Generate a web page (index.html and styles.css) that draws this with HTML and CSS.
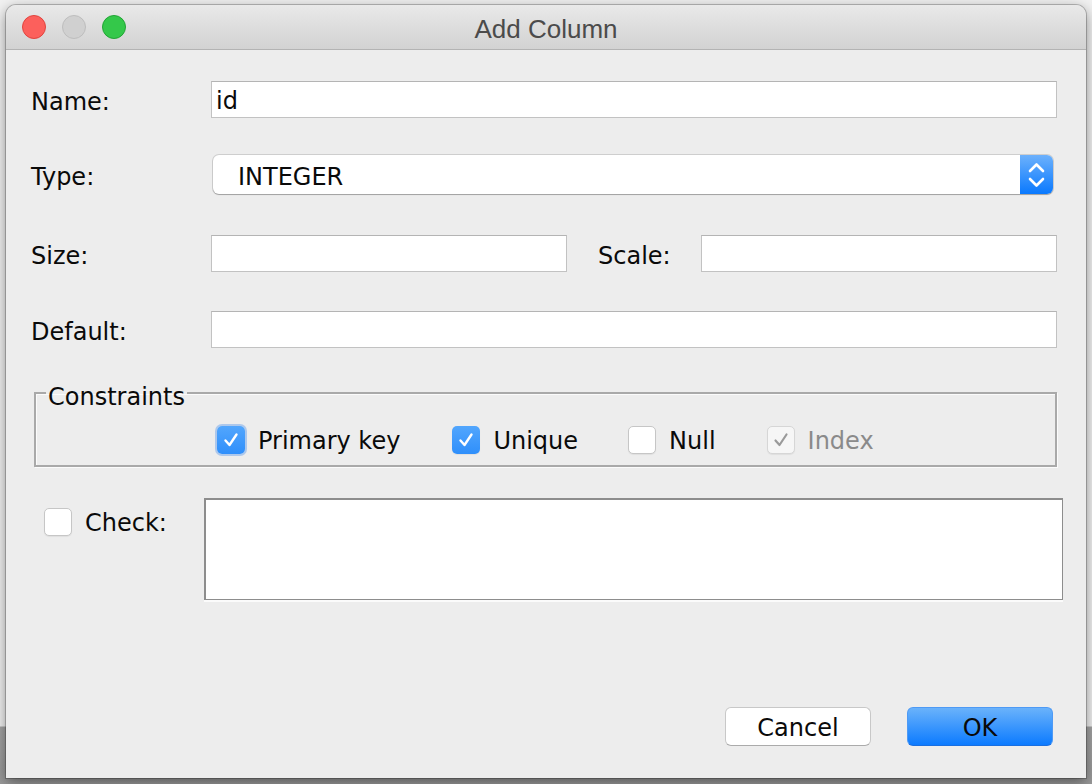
FILE: index.html
```html
<!DOCTYPE html>
<html>
<head>
<meta charset="utf-8">
<title>Add Column</title>
<link rel="stylesheet" href="styles.css">
</head>
<body>
<div class="window">
  <div class="titlebar">
    <div class="lights">
      <span class="light red"></span>
      <span class="light grey"></span>
      <span class="light green"></span>
    </div>
    <div class="title">Add Column</div>
    <div></div>
  </div>
  <div class="content">
    <div class="row row-name">
      <label class="label">Name:</label>
      <div class="input">id</div>
    </div>
    <div class="row row-type">
      <label class="label">Type:</label>
      <div class="select">
        <span class="select-text">INTEGER</span>
        <span class="stepper">
          <svg width="33" height="39" viewBox="0 0 33 39"><polyline points="10,16 16.5,9.5 23,16" fill="none" stroke="#fff" stroke-width="2.6" stroke-linecap="round" stroke-linejoin="round"/><polyline points="10,24 16.5,30.5 23,24" fill="none" stroke="#fff" stroke-width="2.6" stroke-linecap="round" stroke-linejoin="round"/></svg>
        </span>
      </div>
    </div>
    <div class="row row-size">
      <label class="label">Size:</label>
      <div class="input"></div>
      <label class="label label-scale">Scale:</label>
      <div class="input"></div>
    </div>
    <div class="row row-default">
      <label class="label">Default:</label>
      <div class="input"></div>
    </div>
    <fieldset class="group">
      <legend class="legend">Constraints</legend>
      <div class="checks">
        <div class="check-item">
          <span class="cb checked focus"><svg width="28" height="28" viewBox="0 0 28 28"><polyline points="8.5,14.5 12.5,19 19.5,8.5" fill="none" stroke="#fff" stroke-width="2.4" stroke-linecap="round" stroke-linejoin="round"/></svg></span>
          <span class="cb-text">Primary key</span>
        </div>
        <div class="check-item">
          <span class="cb checked"><svg width="28" height="28" viewBox="0 0 28 28"><polyline points="8.5,14.5 12.5,19 19.5,8.5" fill="none" stroke="#fff" stroke-width="2.4" stroke-linecap="round" stroke-linejoin="round"/></svg></span>
          <span class="cb-text">Unique</span>
        </div>
        <div class="check-item">
          <span class="cb"></span>
          <span class="cb-text">Null</span>
        </div>
        <div class="check-item">
          <span class="cb disabled"><svg width="28" height="28" viewBox="0 0 28 28"><polyline points="8.5,14.5 12.5,19 19.5,8.5" fill="none" stroke="#9a9a9a" stroke-width="2.2" stroke-linecap="round" stroke-linejoin="round"/></svg></span>
          <span class="cb-text disabled-text">Index</span>
        </div>
      </div>
    </fieldset>
    <div class="row-check">
      <div class="check-left">
        <span class="cb"></span>
        <span class="cb-text">Check:</span>
      </div>
      <div class="textarea"></div>
    </div>
    <div class="buttons">
      <button class="btn">Cancel</button>
      <button class="btn primary">OK</button>
    </div>
  </div>
</div>
</body>
</html>
```

FILE: styles.css
```css
* { box-sizing: border-box; }
html, body { margin: 0; padding: 0; }
body {
  width: 1092px;
  height: 784px;
  overflow: hidden;
  background: linear-gradient(#f1f1f1 0, #f1f1f1 726px, #a4a4a4 727px, #9a9a9a 784px);
  font-family: "DejaVu Sans", "Liberation Sans", sans-serif;
  font-size: 24px;
  color: #0a0a0a;
}
.window {
  margin: 5px 0 0 6px;
  width: 1080px;
  height: 773px;
  background: #ededed;
  border-radius: 10px 10px 0 0;
  box-shadow: 0 0 0 1px rgba(0,0,0,0.22), 0 4px 14px rgba(0,0,0,0.45);
  display: flex;
  flex-direction: column;
  overflow: hidden;
}
.titlebar {
  height: 45px;
  flex: none;
  background: linear-gradient(#e9e9e9, #d2d2d2);
  border-bottom: 1px solid #b3b3b3;
  display: grid;
  grid-template-columns: 1fr auto 1fr;
  align-items: center;
}
.lights {
  display: flex;
  gap: 16px;
  padding-left: 16px;
  margin-top: -1px;
}
.light {
  width: 24px;
  height: 24px;
  border-radius: 50%;
  display: block;
}
.red { background: #fc605c; border: 1px solid #e0443e; }
.grey { background: #d0d0d0; border: 1px solid #bdbdbd; }
.green { background: #34c84a; border: 1px solid #22a435; }
.title {
  font-family: "Liberation Sans", Arial, sans-serif;
  font-size: 26px;
  color: #4b4b4b;
  margin-top: 5px;
}
.content {
  padding: 31px 29px 0 25px;
  display: flex;
  flex-direction: column;
}
.row {
  display: grid;
  grid-template-columns: 180px 1fr;
  align-items: center;
}
.label { line-height: 30px; margin-top: 4px; }
.input {
  height: 37px;
  background: #fff;
  border: 1px solid #c2c2c2;
  border-top-color: #b4b4b4;
  padding: 2px 4px 0 4px;
  line-height: 35px;
}
.row-name { height: 37px; }
.row-type { height: 39px; margin-top: 37px; }
.row-size {
  height: 37px;
  margin-top: 41px;
  grid-template-columns: 180px 356px 134px 1fr;
}
.label-scale { margin-left: 31px; }
.row-default { height: 37px; margin-top: 39px; }
.select {
  height: 39px;
  margin: 0 4px 0 2px;
  background: #fff;
  border-radius: 6px;
  box-shadow: 0 0 0 1px rgba(0,0,0,0.13), 0 1px 1px rgba(0,0,0,0.22);
  display: flex;
  align-items: center;
  justify-content: space-between;
}
.select-text { padding-left: 25px; line-height: 30px; margin-top: 4px; }
.stepper {
  width: 33px;
  height: 39px;
  border-radius: 0 6px 6px 0;
  background: linear-gradient(#6cb1fc, #0a79fe);
  display: block;
}
.stepper svg { display: block; }
.group {
  margin: 29px 0 0 3px;
  padding: 17px 0 11px 10px;
  border: 2px solid #a9a9a9;
  box-shadow: 1px 1px 0 #fbfbfb, inset 1px 1px 0 #fbfbfb;
  min-inline-size: 0;
}
.legend {
  padding: 8px 2px 0 2px;
  line-height: 24px;
}
.checks {
  display: flex;
  align-items: flex-start;
  margin-left: 171px;
  height: 28px;
}
.check-item {
  display: flex;
  align-items: flex-start;
}
.check-item:nth-child(1) { margin-right: 52px; }
.check-item:nth-child(2) { margin-right: 50px; }
.check-item:nth-child(3) { margin-right: 51px; }
.cb {
  width: 28px;
  height: 28px;
  border-radius: 5px;
  background: #fff;
  border: 1px solid #c6c6c6;
  box-shadow: 0 1px 1px rgba(0,0,0,0.06);
  display: block;
  flex: none;
}
.cb svg { display: block; margin: -1px; }
.cb.checked {
  border: none;
  background: linear-gradient(#52a6fd, #2f8ffb);
}
.cb.checked svg { margin: 0; }
.cb.focus { box-shadow: 0 0 0 2px rgba(120, 170, 235, 0.55); }
.cb.disabled { background: #f6f6f6; border-color: #d6d6d6; }
.cb-text { margin-left: 13px; line-height: 30px; margin-top: 0; }
.disabled-text { color: #8a8a8a; }
.row-check {
  display: grid;
  grid-template-columns: 173px 859px;
  margin-top: 31px;
  margin-right: -6px;
}
.check-left {
  display: flex;
  align-items: flex-start;
  padding: 10px 0 0 13px;
  align-self: start;
}
.check-left .cb-text { margin-left: 13px; }
.textarea {
  height: 102px;
  background: #fff;
  border: 2px solid #8d8d8d;
  border-right-width: 1px;
  border-bottom-width: 1px;
  box-shadow: 0 2px 0 #fbfbfb;
}
.buttons {
  display: flex;
  justify-content: flex-end;
  gap: 36px;
  margin-top: 107px;
  margin-right: 4px;
}
.btn {
  width: 146px;
  height: 39px;
  font-family: "DejaVu Sans", "Liberation Sans", sans-serif;
  font-size: 24px;
  color: #0a0a0a;
  background: #fff;
  border: 1px solid #c8c8c8;
  border-bottom-color: #ababab;
  border-radius: 6px;
  padding: 3px 0 0 0;
  line-height: 30px;
}
.btn.primary {
  background: linear-gradient(#6ab2fb, #0c7bff);
  border-color: #4e9af5;
  border-bottom-color: #1a6fe0;
}
```
